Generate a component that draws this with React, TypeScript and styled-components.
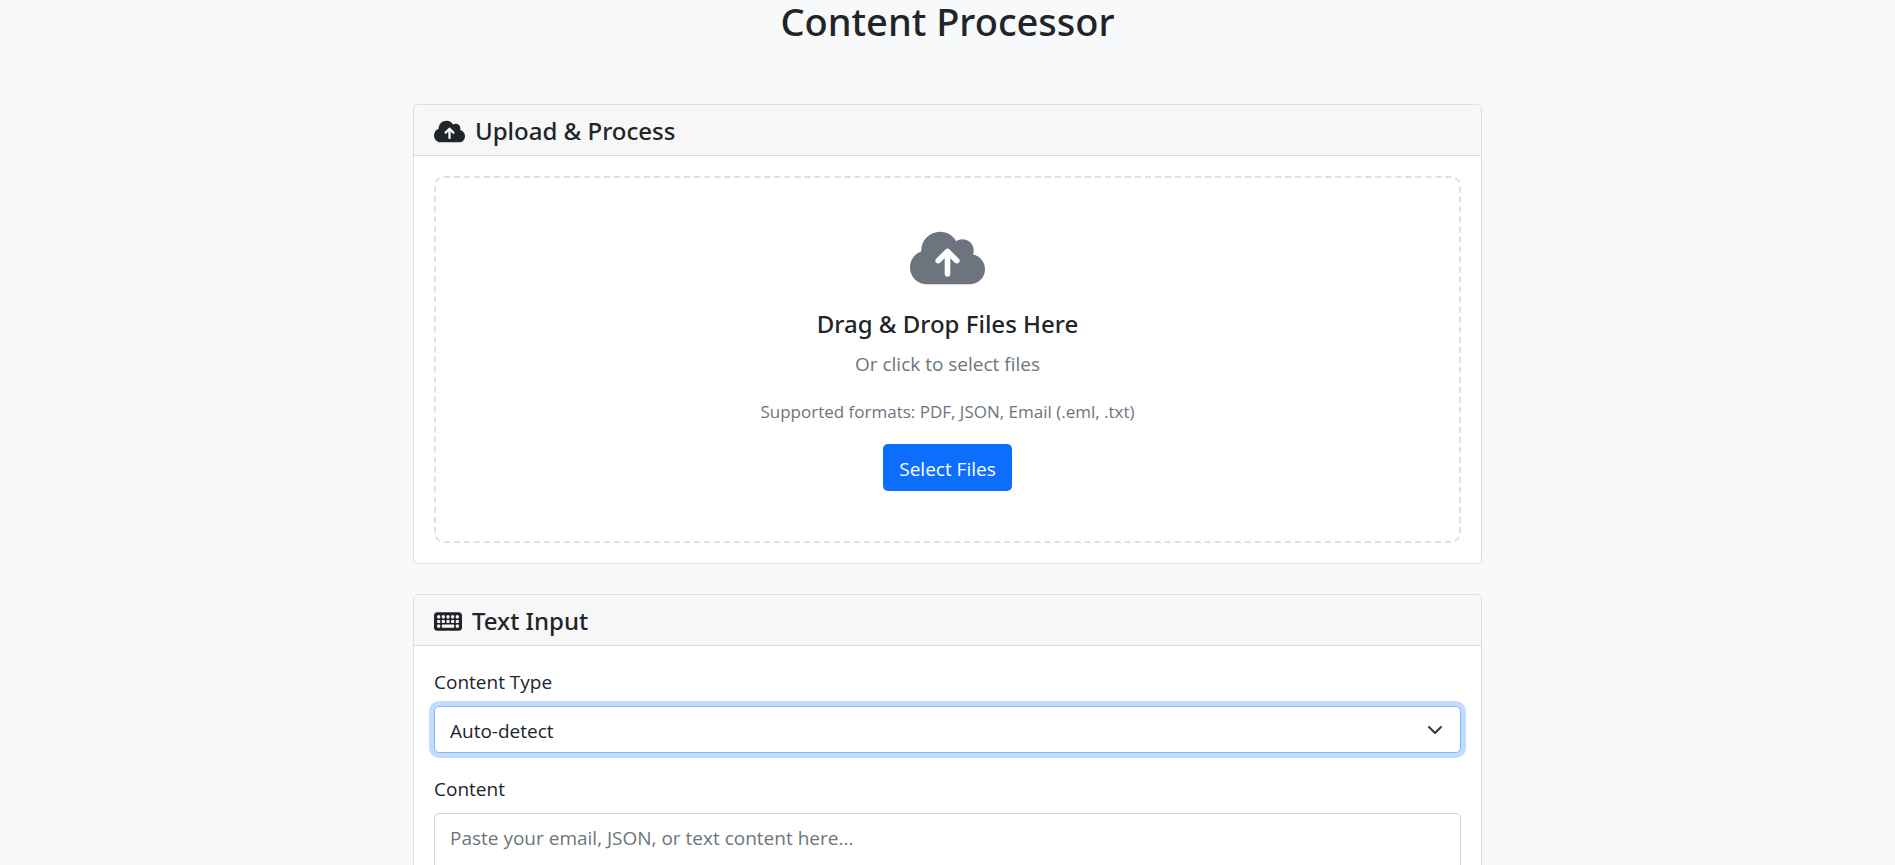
import React, { useState } from "react";
import styled, { createGlobalStyle } from "styled-components";
import { FaCloudArrowUp, FaKeyboard } from "react-icons/fa6";

const GlobalStyle = createGlobalStyle`
  *, *::before, *::after { box-sizing: border-box; }
  body {
    margin: 0;
    background: #f8f9fa;
    color: #212529;
    font-family: "Segoe UI", "Open Sans", "Noto Sans", sans-serif;
    font-size: 19px;
    line-height: 32px;
  }
  h1, h2, h3 {
    font-family: "Segoe UI", "Noto Sans", "Open Sans", sans-serif;
    font-weight: 500;
  }
`;

const Page = styled.main`
  height: 100vh;
  overflow: hidden;
`;

const Container = styled.div`
  width: 100%;
  max-width: 1069px;
  margin: 0 auto;
`;

const Title = styled.h1`
  margin: 0 0 62px;
  font-size: 38px;
  line-height: 42px;
  text-align: center;
`;

const Card = styled.section`
  margin-bottom: 30px;
  background: #fff;
  border: 1px solid #dfdfdf;
  border-radius: 5px;
  overflow: hidden;
`;

const CardHeader = styled.header`
  padding: 10px 20px 8px;
  background: #f7f7f7;
  border-bottom: 1px solid #d8d8d8;
`;

const CardTitle = styled.h2<{ $iconWidth: number }>`
  display: flex;
  align-items: center;
  gap: 10px;
  margin: 0;
  font-size: 24px;
  line-height: 32px;

  svg {
    width: ${(p) => p.$iconWidth}px;
    height: 25px;
  }
`;

const CardBody = styled.div`
  padding: 20px;
`;

const DropZone = styled.div`
  display: flex;
  flex-direction: column;
  align-items: center;
  padding: 50px;
  border: 2px dashed #dee2e6;
  border-radius: 10px;
  text-align: center;
`;

const CloudIcon = styled(FaCloudArrowUp)`
  width: 75px;
  height: 60px;
  margin-bottom: 20px;
  color: #6c757d;
`;

const DropTitle = styled.h3`
  margin: 0 0 8px;
  font-size: 24px;
  line-height: 32px;
`;

const Muted = styled.p<{ $small?: boolean }>`
  margin: 0 0 18px;
  color: #6c757d;
  font-size: ${(p) => (p.$small ? 17 : 19)}px;
  line-height: ${(p) => (p.$small ? 28 : 32)}px;
`;

const PrimaryButton = styled.button`
  height: 47px;
  padding: 2px 16px 0;
  border: 0;
  border-radius: 5px;
  background: #0d6efd;
  color: #fff;
  font: inherit;
  cursor: pointer;
`;

const Field = styled.div`
  margin-bottom: 20px;
`;

const Label = styled.label`
  display: block;
  margin-bottom: 8px;
`;

const SelectBox = styled.div`
  display: grid;
  align-items: center;

  > * { grid-area: 1 / 1; }
`;

const Select = styled.select`
  width: 100%;
  height: 47px;
  padding: 2px 48px 0 15px;
  appearance: none;
  border: 1px solid #86b7fe;
  border-radius: 5px;
  outline: 0;
  background: #fff;
  box-shadow: 0 0 0 5px #c2dbff;
  color: inherit;
  font: inherit;
`;

const Chevron = styled.svg`
  justify-self: end;
  width: 16px;
  height: 16px;
  margin-right: 18px;
  pointer-events: none;
`;

const TextArea = styled.textarea`
  display: block;
  width: 100%;
  padding: 8px 15px;
  border: 1px solid #ced4da;
  border-radius: 5px;
  background: #fff;
  color: inherit;
  font: inherit;

  &::placeholder { color: #6c757d; opacity: 1; }
`;

export default function App() {
  const [type, setType] = useState("auto");
  const [content, setContent] = useState("");

  return (
    <Page>
      <GlobalStyle />
      <Container>
        <Title>Content Processor</Title>

        <Card>
          <CardHeader>
            <CardTitle $iconWidth={31}>
              <FaCloudArrowUp aria-hidden />
              Upload &amp; Process
            </CardTitle>
          </CardHeader>
          <CardBody>
            <DropZone>
              <CloudIcon aria-hidden />
              <DropTitle>Drag &amp; Drop Files Here</DropTitle>
              <Muted>Or click to select files</Muted>
              <Muted $small>Supported formats: PDF, JSON, Email (.eml, .txt)</Muted>
              <PrimaryButton type="button">Select Files</PrimaryButton>
            </DropZone>
          </CardBody>
        </Card>

        <Card>
          <CardHeader>
            <CardTitle $iconWidth={28}>
              <FaKeyboard aria-hidden />
              Text Input
            </CardTitle>
          </CardHeader>
          <CardBody>
            <Field>
              <Label htmlFor="content-type">Content Type</Label>
              <SelectBox>
                <Select id="content-type" value={type} onChange={(e) => setType(e.target.value)}>
                  <option value="auto">Auto-detect</option>
                  <option value="email">Email</option>
                  <option value="json">JSON</option>
                  <option value="text">Text</option>
                </Select>
                <Chevron viewBox="0 0 16 16" fill="none" stroke="#343a40" strokeWidth="2" strokeLinecap="round" strokeLinejoin="round" aria-hidden>
                  <path d="m2 5 6 6 6-6" />
                </Chevron>
              </SelectBox>
            </Field>
            <Field>
              <Label htmlFor="content">Content</Label>
              <TextArea
                id="content"
                rows={8}
                placeholder="Paste your email, JSON, or text content here..."
                value={content}
                onChange={(e) => setContent(e.target.value)}
              />
            </Field>
          </CardBody>
        </Card>
      </Container>
    </Page>
  );
}
